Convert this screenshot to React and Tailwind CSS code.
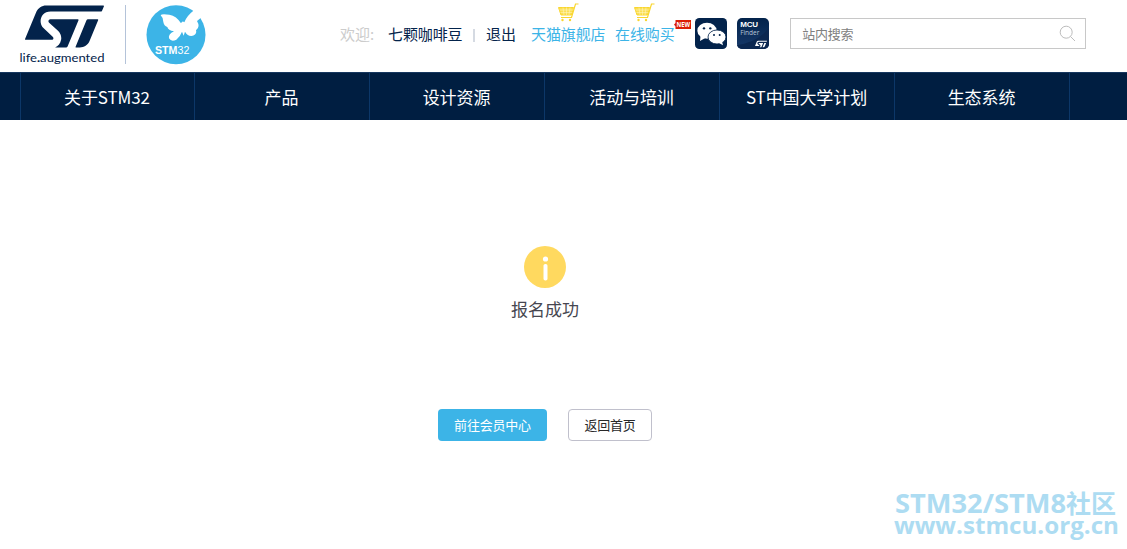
import { useState } from 'react';
import { SiStmicroelectronics } from 'react-icons/si';

const NAV_ITEMS = ['关于STM32', '产品', '设计资源', '活动与培训', 'ST中国大学计划', '生态系统'];

function Stm32Logo() {
  return (
    <svg viewBox="0 0 180 180" className="h-[60px] w-[60px]">
      <circle cx="90" cy="89" r="88.5" fill="#3cb4e7" />
      <path
        d="M172 0 L146 14 Q122 32 115 52 Q109 46 105 55 Q92 33 70 29 Q46 25 44 31 Q52 38 52 51 Q54 63 64 66 Q66 76 84 79 Q66 88 69 100 Q76 112 91 104 Q102 96 108 80 L113 92 L117 80 Q128 98 144 91 Q153 85 150 76 Q164 66 153 48 L180 26 Z"
        fill="#fff"
      />
      <text x="27" y="147" fontSize="34" fill="#fff" fontFamily="Liberation Sans, sans-serif" textLength="103" lengthAdjust="spacingAndGlyphs">
        <tspan fontWeight="700">STM</tspan>32
      </text>
    </svg>
  );
}

function CartIcon() {
  return (
    <svg viewBox="0 0 21 19" className="h-[19px] w-[21px]" fill="none" stroke="#f9d62e">
      <path d="M0.5 4.5 H15.5 L13.5 12 H3 Z" fill="#fbdf55" strokeWidth="1" />
      <path d="M1.5 7 H15 M2.5 9.5 H14 M5 4.5 L6 12 M8.5 4.5 V12 M12 4.5 L11 12" stroke="#fff7c8" strokeWidth="0.5" />
      <path d="M20.5 1 H17.5 L13.5 14.5 H3" strokeWidth="1.2" />
      <circle cx="4.5" cy="17" r="1.2" fill="#f9d62e" stroke="none" />
      <circle cx="12" cy="17" r="1.2" fill="#f9d62e" stroke="none" />
    </svg>
  );
}

function WechatIcon() {
  return (
    <svg viewBox="0 0 96 93" className="h-[31px] w-8">
      <rect width="96" height="93" rx="13" fill="#03234b" />
      <g fill="#fff">
        <ellipse cx="36" cy="38" rx="29" ry="24" />
        <path d="M17 52 L15 69 L31 60 Z" />
        <ellipse cx="66" cy="57" rx="27" ry="21" stroke="#03234b" strokeWidth="2.5" />
        <path d="M72 75 L84 82 L81 70 Z" />
      </g>
      <g fill="#03234b">
        <circle cx="27" cy="31" r="3.5" />
        <circle cx="46" cy="31" r="3.5" />
        <circle cx="57" cy="51" r="3" />
        <circle cx="74" cy="51" r="3" />
      </g>
    </svg>
  );
}

function McuFinderIcon() {
  return (
    <div className="relative h-[31px] w-8 overflow-hidden rounded-[5px] bg-gradient-to-b from-[#03234b] to-[#17396a] pt-[3px] pl-[3px] text-white">
      <svg viewBox="0 0 32 32" className="absolute inset-0 h-8 w-8">
        <path d="M0 27 Q20 25 32 10 V32 H0 Z" fill="#0b2750" />
      </svg>
      <div className="relative font-['Liberation_Sans',sans-serif] text-[8px] leading-[8px] font-bold tracking-[-0.1px]">MCU</div>
      <div className="relative font-['Open_Sans',sans-serif] text-[6.5px] leading-[7px] text-[#b9c6da]">Finder</div>
      <SiStmicroelectronics className="absolute right-[2px] -bottom-[1px] h-[12px] w-[12px]" />
    </div>
  );
}

function ShopLink({ label, isNew }) {
  return (
    <a href="#" className="relative flex flex-col items-center text-[#3cb4e7]">
      <CartIcon />
      <span className="mt-px leading-[22px] tracking-[-0.1px]">{label}</span>
      {isNew && (
        <svg viewBox="0 0 17 9" className="absolute top-[17px] -right-[16px] h-[9px] w-[17px]">
          <path d="M1.5 0 H17 V9 H1.5 V6.5 L0 4.5 L1.5 3 Z" fill="#dc1e05" />
          <text x="2.5" y="7" fontSize="6.8" fontWeight="700" fill="#fff" fontFamily="Open Sans, sans-serif" textLength="13.5" lengthAdjust="spacingAndGlyphs">
            NEW
          </text>
        </svg>
      )}
    </a>
  );
}

export default function App() {
  const [keyword, setKeyword] = useState('');

  return (
    <div className="relative h-[549px] w-full overflow-hidden bg-white font-['Noto_Sans_CJK_SC',sans-serif] text-[#03234b]">
      {/* Header */}
      <header className="flex h-[72px] items-start pl-[18px]">
        <div className="flex w-[92px] flex-col">
          <div className="flex h-[52px] items-center overflow-hidden pl-[7px]">
            <SiStmicroelectronics className="h-[79px] w-[79px] shrink-0" />
          </div>
          <svg viewBox="0 0 92 16" className="h-4 w-[92px]" fill="currentColor">
            <text x="1.5" y="9.8" fontSize="11" fontFamily="Lato, sans-serif" textLength="85" lengthAdjust="spacingAndGlyphs">
              life<tspan fontWeight="900">.</tspan>augmented
            </text>
          </svg>
        </div>
        <div className="mt-[5px] ml-[15px] h-[59px] w-px bg-[#b4c3d9]" />
        <div className="mt-[5px] ml-[20px]">
          <Stm32Logo />
        </div>

        <div className="ml-[134px] flex items-start text-[15px] leading-[22px] whitespace-nowrap">
          <span className="mt-[23px] w-[48px] text-[#ccc]">欢迎:</span>
          <a href="#" className="mt-[23px] w-[74px] tracking-[-0.1px]">七颗咖啡豆</a>
          <span className="mt-[29px] ml-[11px] h-[13px] w-[2px] bg-[#d5dae2]" />
          <a href="#" className="mt-[23px] ml-[11px] w-[30px]">退出</a>
          <div className="mt-[3px] ml-[15px] flex gap-[9.5px]">
            <ShopLink label="天猫旗舰店" />
            <ShopLink label="在线购买" isNew />
          </div>
        </div>

        <div className="mt-[18px] ml-[20.5px] flex gap-[10px]">
          <WechatIcon />
          <McuFinderIcon />
        </div>

        <div className="mt-[18px] ml-[21px] flex h-[31px] w-[296px] items-center border border-[#c8c8c8] pr-[9px] pl-[11px]">
          <input
            type="text"
            value={keyword}
            onChange={(e) => setKeyword(e.target.value)}
            placeholder="站内搜索"
            className="min-w-0 flex-1 text-[13px] tracking-[-0.2px] text-gray-600 outline-none placeholder:text-[#808080]"
          />
          <svg viewBox="0 0 17 17" className="h-[17px] w-[17px]" fill="none" stroke="#bdbdbd">
            <circle cx="7.2" cy="7.2" r="6" />
            <path d="M11.5 11.5 L16 16" />
          </svg>
        </div>
      </header>

      {/* Main menu */}
      <nav className="flex h-12 border-t border-[#16375f] bg-[#001e41] pl-5 text-[17px] text-white">
        {NAV_ITEMS.map((item) => (
          <a
            key={item}
            href="#"
            className="flex w-[175px] items-center justify-center border-l border-[#0c3768] pr-px tracking-[-0.1px] first:w-[174px] last:w-[176px] last:border-r"
          >
            {item}
          </a>
        ))}
      </nav>

      {/* Result */}
      <main className="flex w-[1090px] flex-col items-center pt-[126px]">
        <svg viewBox="0 0 42 42" className="h-[42px] w-[42px]">
          <circle cx="21" cy="21" r="21" fill="#ffd95f" />
          <circle cx="21.5" cy="13" r="2.6" fill="#fff" />
          <rect x="19.5" y="18" width="4" height="16.5" rx="1.8" fill="#fff" />
        </svg>
        <p className="mt-[8px] text-[17px] leading-[26px] text-[#464650]">报名成功</p>
        <div className="mt-[87px] flex gap-[21px] text-[13px]">
          <button className="h-8 w-[109px] rounded-[4px] bg-[#3cb4e7] tracking-[-0.2px] text-white">前往会员中心</button>
          <button className="h-8 w-[84px] rounded-[4px] border border-[#c0c0cc] tracking-[-0.2px] text-[#282828]">返回首页</button>
        </div>
      </main>

      {/* Watermark */}
      <svg viewBox="0 0 230 70" className="absolute right-[5px] bottom-[-2px] h-[70px] w-[230px] overflow-visible" fill="#addcf2" fontWeight="700" fontFamily="Open Sans, sans-serif">
        <text x="3" y="32" fontSize="26" textLength="171" lengthAdjust="spacingAndGlyphs">STM32/STM8</text>
        <text x="174" y="32" fontSize="25" fontFamily="Noto Sans CJK SC, sans-serif">社区</text>
        <text x="2" y="53" fontSize="23.5" textLength="225" lengthAdjust="spacingAndGlyphs">www.stmcu.org.cn</text>
      </svg>
    </div>
  );
}
